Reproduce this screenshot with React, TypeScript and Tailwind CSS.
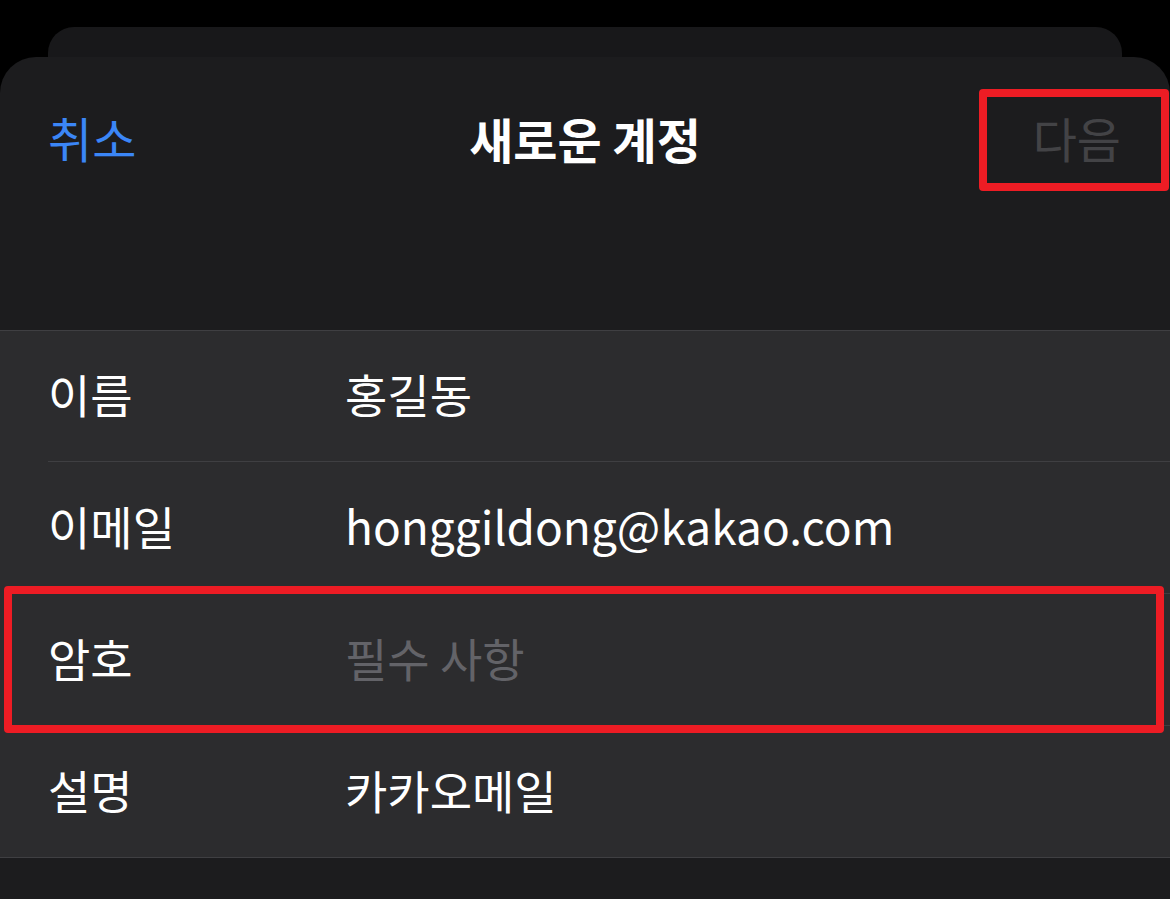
import React from "react";

const font = { fontFamily: '"Noto Sans CJK KR", "Noto Sans", sans-serif' };

function Row({ label, value, placeholder, last, h }: { label: string; value: string; placeholder?: boolean; last?: boolean; h: string }) {
  return (
    <div className="pl-[48px] bg-[#2c2c2e]">
      <div className={`flex items-center pb-[6px] ${h} ${last ? "" : "border-b border-[#3f3f42]"}`}>
        <div className="w-[297px] text-[46px] text-white leading-none">{label}</div>
        <div className={`text-[46px] leading-none ${placeholder ? "text-[#636368]" : "text-white"}`}>{value}</div>
      </div>
    </div>
  );
}

export default function App() {
  return (
    <div className="relative h-[899px] w-[1170px] bg-black overflow-hidden flex flex-col pt-[27px]" style={font}>
      <div className="ml-[48px] w-[1074px] h-[30px] rounded-t-[26px] bg-[#18181a]" />
      <div className="flex-1 rounded-t-[36px] bg-[#1c1c1e] flex flex-col">
        <div className="h-[273px]">
          <div className="relative h-[166px] flex items-center justify-between pl-[48px] pr-[49px] pb-[6px]">
            <span className="text-[48px] leading-none text-[#3b86f7]">취소</span>
            <span className="absolute left-0 right-0 top-[57px] text-center text-[48px] leading-none font-bold text-white pointer-events-none">새로운 계정</span>
            <span className="text-[48px] leading-none text-[#434346]">다음</span>
          </div>
        </div>
        <div className="border-t border-[#3f3f42]">
          <Row h="h-[131px]" label="이름" value="홍길동" />
          <Row h="h-[132px]" label="이메일" value="honggildong@kakao.com" />
          <Row h="h-[132px]" label="암호" value="필수 사항" placeholder />
          <Row h="h-[131px]" label="설명" value="카카오메일" last />
        </div>
        <div className="border-t border-[#3f3f42] flex-1" />
      </div>
      <div className="absolute left-[979px] top-[89px] w-[190px] h-[102px] border-[8px] border-[#ed1c24] rounded-[4px]" />
      <div className="absolute left-[4px] top-[586px] w-[1160px] h-[147px] border-[8px] border-[#ed1c24] rounded-[4px]" />
    </div>
  );
}
